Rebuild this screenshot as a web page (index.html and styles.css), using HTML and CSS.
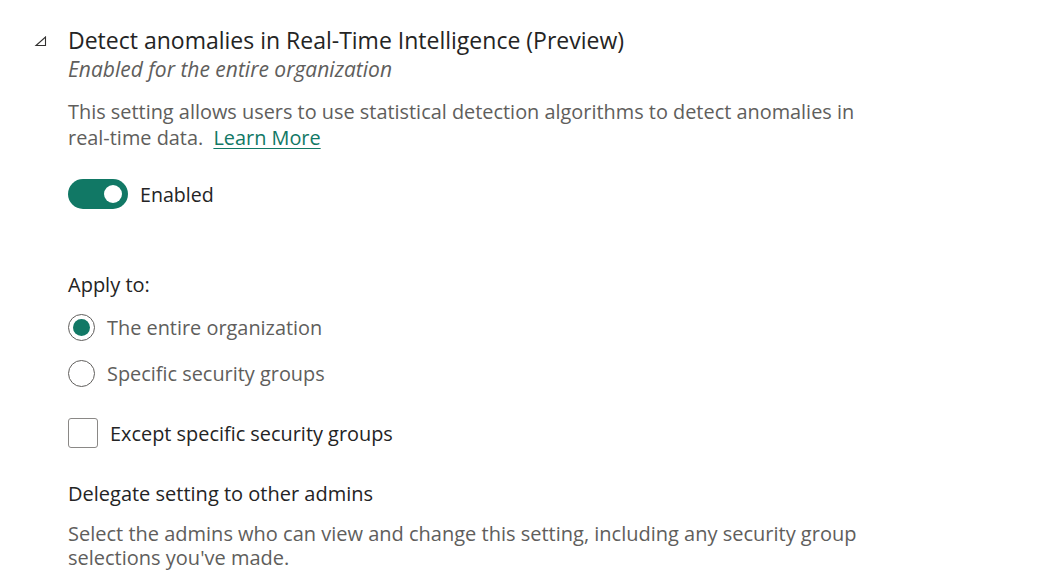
FILE: index.html
```html
<!DOCTYPE html>
<html lang="en">
<head>
<meta charset="utf-8">
<title>Detect anomalies setting</title>
<link rel="stylesheet" href="styles.css">
</head>
<body>
<div class="setting">
  <div class="header">
    <span class="caret">
      <svg width="14" height="11" viewBox="0 0 14 11"><path d="M12.5 1 L12.5 9.5 L3 9.5 Z" fill="none" stroke="#323130" stroke-width="1.1" stroke-linejoin="miter"/></svg>
    </span>
    <div class="titles">
      <div class="title">Detect anomalies in Real-Time Intelligence (Preview)</div>
      <div class="subtitle">Enabled for the entire organization</div>
    </div>
  </div>
  <div class="body">
    <p class="desc"><span>This setting allows users to use statistical detection algorithms to detect anomalies in</span> <span>real-time data.</span> <a class="link" href="#">Learn More</a></p>
    <div class="toggle-row">
      <span class="toggle"><span class="knob"></span></span>
      <span class="toggle-label">Enabled</span>
    </div>
    <div class="apply">Apply to:</div>
    <div class="radio-row">
      <span class="radio checked"><span class="dot"></span></span>
      <span class="radio-label">The entire organization</span>
    </div>
    <div class="radio-row second">
      <span class="radio"></span>
      <span class="radio-label">Specific security groups</span>
    </div>
    <div class="check-row">
      <span class="checkbox"></span>
      <span class="check-label">Except specific security groups</span>
    </div>
    <div class="delegate">Delegate setting to other admins</div>
    <p class="delegate-desc">Select the admins who can view and change this setting, including any security group selections you've made.</p>
  </div>
</div>
</body>
</html>
```
FILE: styles.css
```css
html, body {
  margin: 0;
  padding: 0;
  background: #ffffff;
}
body {
  font-family: "Open Sans", "Noto Sans", sans-serif;
  color: #242424;
}
.setting {
  padding: 26px 0 0 33px;
}
.header {
  display: flex;
  align-items: flex-start;
}
.caret {
  width: 35px;
  padding-top: 10px;
  display: flex;
}
.title {
  font-size: 23px;
  line-height: 28px;
  color: #242424;
}
.subtitle {
  font-size: 21px;
  line-height: 30px;
  font-style: italic;
  color: #605e5c;
}
.body {
  padding-left: 35px;
}
.desc {
  margin: 15px 0 0;
  width: 800px;
  font-size: 19.9px;
  line-height: 26px;
  color: #605e5c;
}
.link {
  margin-left: 5px;
  color: #117865;
  text-decoration: underline;
  text-underline-offset: 3px;
}
.toggle-row {
  display: flex;
  align-items: center;
  margin-top: 28px;
  height: 30px;
}
.toggle {
  width: 60px;
  height: 30px;
  border-radius: 15px;
  background: #117865;
  display: flex;
  align-items: center;
  justify-content: flex-end;
  padding-right: 6px;
  box-sizing: border-box;
}
.knob {
  width: 18px;
  height: 18px;
  border-radius: 50%;
  background: #ffffff;
}
.toggle-label {
  margin-left: 12px;
  font-size: 19.6px;
  color: #242424;
}
.apply {
  margin-top: 63px;
  font-size: 20px;
  line-height: 26px;
  color: #242424;
}
.radio-row {
  display: flex;
  align-items: center;
  margin-top: 15px;
  height: 28px;
}
.radio-row.second {
  margin-top: 18px;
}
.radio {
  width: 27px;
  height: 27px;
  box-sizing: border-box;
  border: 1px solid #605e5c;
  border-radius: 50%;
  display: flex;
  align-items: center;
  justify-content: center;
}
.dot {
  width: 17px;
  height: 17px;
  border-radius: 50%;
  background: #117865;
}
.radio-label {
  margin-left: 12px;
  font-size: 19.9px;
  color: #605e5c;
}
.check-row {
  display: flex;
  align-items: center;
  margin-top: 31px;
  height: 30px;
}
.checkbox {
  width: 30px;
  height: 30px;
  box-sizing: border-box;
  border: 1px solid #8a8886;
  border-radius: 3px;
}
.check-label {
  margin-left: 12px;
  font-size: 19.9px;
  color: #242424;
}
.delegate {
  margin-top: 33px;
  font-size: 20px;
  line-height: 26px;
  color: #242424;
}
.delegate-desc {
  margin: 15px 0 0;
  width: 800px;
  font-size: 20px;
  line-height: 24px;
  color: #605e5c;
}
```
